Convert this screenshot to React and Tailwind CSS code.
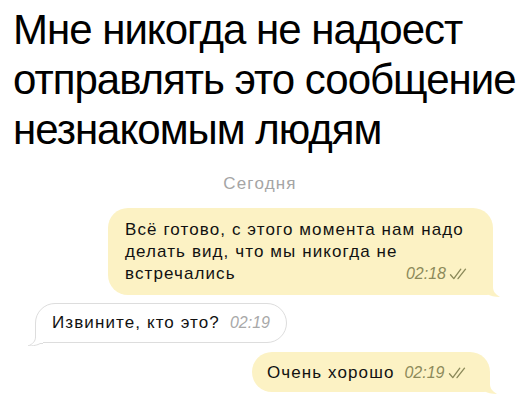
import React from 'react';

// double tick shown after the time of outgoing messages
const Ticks = () => (
  <svg width="20" height="12" viewBox="0 0 20 12" className="inline-block ml-[3px]" fill="none" stroke="#8c8a5a" strokeWidth="1.35" strokeLinecap="round" strokeLinejoin="round">
    <path d="M1.5 6.8 L4.8 10.6 L11.8 1.2" />
    <path d="M9 10.6 L16.5 1.2" />
  </svg>
);

const TailRight = () => (
  <svg width="16" height="16" viewBox="0 0 16 16" className="absolute right-[-8px] bottom-[-2px]">
    <path d="M0 0 L8 0 L8 6 C8 10 10 13 15 16 C10 16 5 15 2 13 L0 13 Z" fill="#fcf2c4" />
  </svg>
);

const TailLeft = () => (
  <svg width="16" height="16" viewBox="0 0 16 16" className="absolute left-[-9px] bottom-[-4px]">
    <path d="M16 0 L8.5 0 L8.5 7 C8.5 11 6 14 1 16 C6 16 11 15 13 13 L16 13 Z" fill="#ffffff" />
    <path d="M8.5 0 L8.5 7 C8.5 11 6 14 1 16 C6 16 11 15 13 13.5 L16 13.5" fill="none" stroke="#dddddd" strokeWidth="1" />
  </svg>
);

const Time = ({ children, color }) => (
  <span className={`italic text-[16px] tracking-[0px] ${color}`}>{children}</span>
);

export default function App() {
  return (
    <div className="w-[520px] h-[416px] bg-white overflow-hidden font-['Liberation_Sans',Arial,sans-serif] text-[#111111]">
      <h1 className="pl-[13px] pt-[5px] text-[42px] leading-[50px] tracking-[-1px] whitespace-nowrap text-black">
        Мне никогда не надоест<br />
        отправлять это сообщение<br />
        незнакомым людям
      </h1>

      <div className="mt-[19px] text-center text-[17px] leading-[20px] tracking-[1.2px] text-[#a5a5a5]">Сегодня</div>

      <div className="mt-[14px] flex flex-col text-[17px] leading-[22px] tracking-[1.1px] whitespace-nowrap">
        <div className="relative self-end mr-[27px] w-[385px] rounded-[20px] rounded-br-[6px] bg-[#fcf2c4] pl-[17px] pr-[24px] pt-[11px] pb-[10px]">
          Всё готово, с этого момента нам надо<br />
          делать вид, что мы никогда не
          <div className="flex justify-between items-center">
            <span>встречались</span>
            <span className="flex items-center">
              <Time color="text-[#8c8a5a]">02:18</Time>
              <Ticks />
            </span>
          </div>
          <TailRight />
        </div>

        <div className="relative self-start ml-[35px] mt-[8px] w-[252px] rounded-[20px] rounded-bl-[6px] border border-[#dddddd] bg-white pl-[16px] py-[8px] flex items-center">
          <span>Извините, кто это?</span>
          <span className="ml-[10px]"><Time color="text-[#a8a8a8]">02:19</Time></span>
          <TailLeft />
        </div>

        <div className="relative self-end mr-[30px] mt-[9px] w-[238px] rounded-[20px] rounded-br-[6px] bg-[#fcf2c4] pl-[15px] pt-[10px] pb-[8px] flex items-center">
          <span>Очень хорошо</span>
          <span className="ml-[10px] flex items-center">
            <Time color="text-[#8c8a5a]">02:19</Time>
            <Ticks />
          </span>
          <TailRight />
        </div>
      </div>
    </div>
  );
}
